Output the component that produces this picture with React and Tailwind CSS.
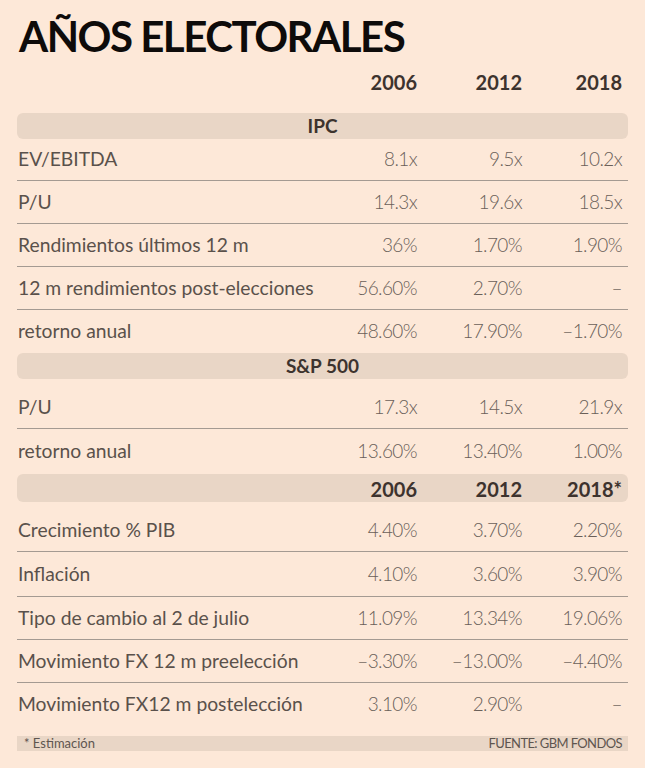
import React from 'react';

const ipc = [
  { label: 'EV/EBITDA', v: ['8.1x', '9.5x', '10.2x'], h: 'h-[42px]' },
  { label: 'P/U', v: ['14.3x', '19.6x', '18.5x'], h: 'h-[43px]' },
  { label: 'Rendimientos últimos 12 m', v: ['36%', '1.70%', '1.90%'], h: 'h-[43px]' },
  { label: '12 m rendimientos post-elecciones', v: ['56.60%', '2.70%', '–'], h: 'h-[43px]' },
  { label: 'retorno anual', v: ['48.60%', '17.90%', '–1.70%'], h: 'h-[43px]', last: true },
];

const sp = [
  { label: 'P/U', v: ['17.3x', '14.5x', '21.9x'], h: 'h-[42px]' },
  { label: 'retorno anual', v: ['13.60%', '13.40%', '1.00%'], h: 'h-[45px]', last: true },
];

const econ = [
  { label: 'Crecimiento % PIB', v: ['4.40%', '3.70%', '2.20%'], h: 'h-[42px]' },
  { label: 'Inflación', v: ['4.10%', '3.60%', '3.90%'], h: 'h-[45px]' },
  { label: 'Tipo de cambio al 2 de julio', v: ['11.09%', '13.34%', '19.06%'], h: 'h-[43px]' },
  { label: 'Movimiento FX 12 m preelección', v: ['–3.30%', '–13.00%', '–4.40%'], h: 'h-[43px]' },
  { label: 'Movimiento FX12 m postelección', v: ['3.10%', '2.90%', '–'], h: 'h-[42px]', last: true },
];

const grid = 'grid grid-cols-[minmax(0,1fr)_105px_105px_100px] pl-[1px] pr-[6px]';

const Row = ({ row }) => (
  <div className={`${grid} ${row.h} items-center ${row.last ? '' : 'border-b border-[#a49a92]'}`}>
    <span className="whitespace-nowrap text-[19.3px] text-[#5a514b]">{row.label}</span>
    {row.v.map((x, i) => (
      <span key={i} className="whitespace-nowrap text-right text-[19px] font-light text-[#6a5f58] tracking-[-0.6px]">{x}</span>
    ))}
  </div>
);

const Bar = ({ children }) => (
  <div className="h-[26px] rounded-[6px] bg-[#e9d6c6] flex items-center justify-center text-[19px] font-bold text-[#3d332e]">
    {children}
  </div>
);

export default function App() {
  return (
    <div className="min-h-screen w-[645px] bg-[#fde8d8] px-[17px] pt-[12px] pb-[17px]" style={{ fontFamily: 'Lato, "Open Sans", sans-serif' }}>
      <h1 className="pl-[2px] text-[42px] leading-[48px] font-bold tracking-[-1.5px] text-[#0e0b0a]">AÑOS ELECTORALES</h1>

      <div className={`${grid} mt-[7px] h-[26px] items-center text-[20px] font-bold text-[#3d332e]`}>
        <span />
        <span className="text-right">2006</span>
        <span className="text-right">2012</span>
        <span className="text-right">2018</span>
      </div>

      <div className="mt-[20px]">
        <Bar>IPC</Bar>
        {ipc.map((r) => <Row key={r.label} row={r} />)}
      </div>

      <Bar>S&amp;P 500</Bar>
      <div className="mt-[8px]">
        {sp.map((r) => <Row key={r.label} row={r} />)}
      </div>

      <div className={`${grid} h-[28px] items-center rounded-[6px] bg-[#e9d6c6] text-[20px] font-bold text-[#3d332e]`}>
        <span />
        <span className="text-right">2006</span>
        <span className="text-right">2012</span>
        <span className="text-right">2018*</span>
      </div>

      <div className="mt-[8px]">
        {econ.map((r) => <Row key={r.label} row={r} />)}
      </div>

      <div className="mt-[11px] h-[15px] bg-[#e9d6c6] flex items-center justify-between pl-[7px] pr-[6px] text-[13px] text-[#5e554f]">
        <span>* Estimación</span>
        <span className="tracking-[-0.6px]">FUENTE: GBM FONDOS</span>
      </div>
    </div>
  );
}
